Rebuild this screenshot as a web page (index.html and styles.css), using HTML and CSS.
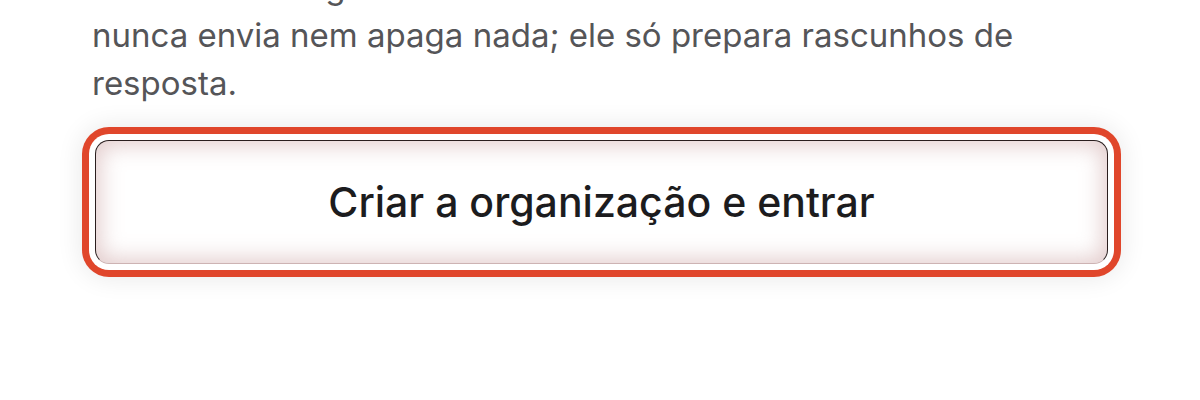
FILE: index.html
```html
<!DOCTYPE html>
<html lang="pt">
<head>
<meta charset="utf-8">
<title>Criar organização</title>
<link rel="stylesheet" href="styles.css">
</head>
<body>
<main class="panel">
  <p class="note">O assistente organiza a caixa de entrada e<br>nunca envia nem apaga nada; ele só prepara rascunhos de resposta.</p>
  <button class="cta" type="button">Criar a organização e entrar</button>
</main>
</body>
</html>
```

FILE: styles.css
```css
html, body {
  margin: 0;
  padding: 0;
  background: #ffffff;
}

body {
  width: 1200px;
  height: 400px;
  overflow: hidden;
  font-family: Inter, "Noto Sans", sans-serif;
}

.panel {
  display: flex;
  flex-direction: column;
  padding: 0 92px;
}

.note {
  margin: -37px 0 0 0;
  font-size: 33px;
  line-height: 48px;
  color: #555558;
}

.cta {
  margin: 33px 0 0 3px;
  height: 124px;
  box-sizing: border-box;
  border: 1px solid #2a1e1e;
  border-bottom-color: #cdb3b3;
  border-radius: 14px;
  background: #ffffff;
  font-family: Inter, "Noto Sans", sans-serif;
  font-size: 41px;
  font-weight: 500;
  color: #1c1c1e;
  cursor: pointer;
  box-shadow:
    inset 0 0 22px 4px rgba(190, 140, 140, 0.45),
    0 0 0 6px #ffffff,
    0 0 0 13px #e0462b,
    0 0 26px 14px rgba(0, 0, 0, 0.09);
}
```
